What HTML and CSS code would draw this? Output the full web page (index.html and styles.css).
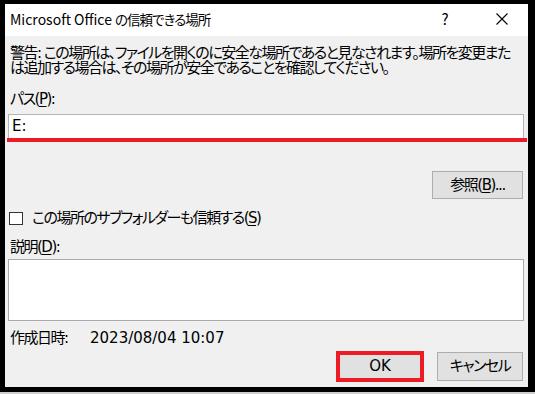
FILE: index.html
```html
<!DOCTYPE html>
<html lang="ja">
<head>
<meta charset="utf-8">
<title>Microsoft Office の信頼できる場所</title>
<link rel="stylesheet" href="styles.css">
</head>
<body>
<div class="window">
  <div class="titlebar">
    <span class="title"><span class="title-latin">Microsoft Office </span><span class="title-jp">の信頼できる場所</span></span>
    <span class="tb-btn help">?</span>
    <span class="tb-btn close"><svg width="12" height="12" viewBox="0 0 12 12"><path d="M0.5 0.5 L11.5 11.5 M11.5 0.5 L0.5 11.5" stroke="#000" stroke-width="1.1" fill="none"/></svg></span>
  </div>
  <div class="content">
    <p class="warning">警告: この場所は、ファイルを開くのに安全な場所であると見なされます。場所を変更また<br>は追加する場合は、その場所が安全であることを確認してください。</p>
    <div class="label path-label">パス(<u>P</u>):</div>
    <div class="path-wrap">
      <div class="input">E:</div>
      <div class="redline"></div>
    </div>
    <div class="browse-row"><span class="btn browse">参照(<u>B</u>)...</span></div>
    <div class="check-row"><span class="checkbox"></span><span class="check-text">この場所のサブフォルダーも信頼する(<u>S</u>)</span></div>
    <div class="label desc-label">説明(<u>D</u>):</div>
    <div class="textarea"></div>
    <div class="created"><span class="created-label">作成日時:</span><span class="date">2023/08/04 10:07</span></div>
    <div class="buttons">
      <span class="btn ok">OK</span>
      <span class="btn cancel">キャンセル</span>
    </div>
  </div>
</div>
</body>
</html>
```
FILE: styles.css
```css
* { box-sizing: border-box; }
html, body { margin: 0; padding: 0; }
body {
  width: 535px;
  height: 394px;
  overflow: hidden;
  background: linear-gradient(to bottom, #000 392px, #cfcfcf 392px);
  font-family: "DejaVu Sans", "Noto Sans CJK JP", sans-serif;
  font-feature-settings: "palt" 1;
  color: #000;
}
.window {
  margin: 4px 0 0 5px;
  width: 523px;
  height: 383px;
  background: #f0f0f0;
  display: flex;
  flex-direction: column;
}
.titlebar {
  height: 32px;
  flex: none;
  background: #fff;
  display: flex;
  align-items: center;
  padding: 0 3px 3px 5px;
}
.title {
  flex: 1;
  font-family: "Noto Sans CJK JP", sans-serif;
  font-size: 14px;
  line-height: 20px;
  white-space: nowrap;
}
.title-jp { font-size: 13.5px; letter-spacing: -1px; }
.tb-btn {
  width: 46px;
  display: flex;
  justify-content: center;
  align-items: center;
  font-family: "Noto Sans CJK JP", sans-serif;
  font-size: 15px;
  line-height: 20px;
}
.help { margin-right: 11px; }
.close svg { display: block; }
.content {
  flex: 1;
  padding: 10px 4px 0 3px;
  display: flex;
  flex-direction: column;
  font-size: 15px;
  line-height: 15px;
  letter-spacing: -1.5px;
}
u { text-underline-offset: 2px; text-decoration-thickness: 1px; }
.warning {
  margin: 0;
  padding-left: 2px;
  white-space: nowrap;
}
.label { padding-left: 2px; }
.path-label { margin-top: 16px; }
.path-wrap { position: relative; margin-top: 7px; }
.input {
  height: 25px;
  background: #fff;
  border: 1px solid #b4b4b4;
  padding: 4px 0 0 3px;
  letter-spacing: 0;
}
.redline {
  position: absolute;
  left: -1px;
  right: -3px;
  top: 24px;
  height: 4px;
  background: #ed1c24;
}
.browse-row {
  margin-top: 32px;
  display: flex;
  justify-content: flex-end;
  padding-right: 1px;
}
.btn {
  display: flex;
  justify-content: center;
  align-items: center;
  background: #e1e1e1;
  border: 1px solid #adadad;
}
.browse { width: 91px; height: 28px; }
.check-row {
  margin-top: 11px;
  height: 16px;
  display: flex;
  align-items: center;
}
.checkbox {
  width: 14px;
  height: 13px;
  margin-left: 1px;
  border: 1px solid #333;
  background: #fff;
}
.check-text { margin-left: 9px; }
.desc-label { margin-top: 14px; }
.textarea {
  margin-top: 4px;
  height: 62px;
  background: #fff;
  border: 1px solid #aaa;
}
.created {
  margin-top: 10px;
  padding-left: 2px;
  display: flex;
}
.created-label { width: 80px; }
.date { letter-spacing: 0; }
.buttons {
  margin-top: 6px;
  display: flex;
  justify-content: flex-end;
  gap: 14px;
  padding-right: 1px;
}
.ok, .cancel { width: 86px; height: 29px; }
.ok {
  letter-spacing: 0;
  outline: 4px solid #ed1c24;
  outline-offset: -3px;
}
```
